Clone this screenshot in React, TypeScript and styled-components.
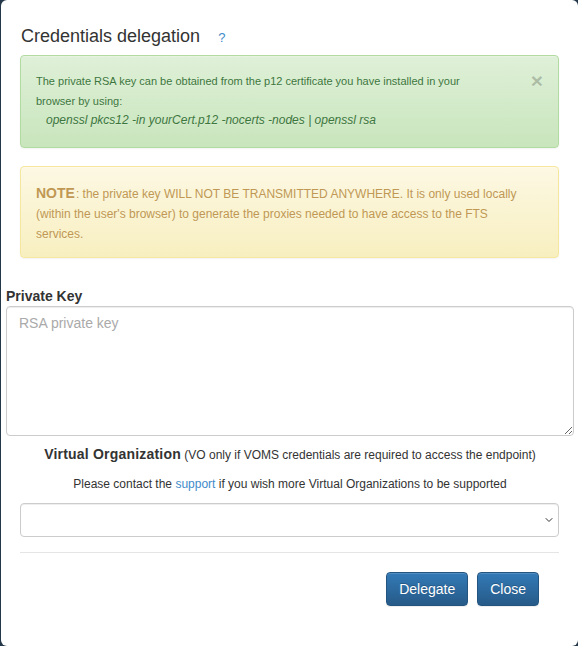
import React from 'react';
import styled, { createGlobalStyle } from 'styled-components';
import { ChevronDown } from 'lucide-react';

const GlobalStyle = createGlobalStyle`
  html, body {
    margin: 0;
    padding: 0;
    overflow: hidden;
    background: #24384a;
  }
  body {
    font-family: "Liberation Sans", Arial, sans-serif;
    color: #333;
  }
`;

const Modal = styled.div`
  box-sizing: border-box;
  margin-left: 1px;
  width: 577px;
  height: 646px;
  background: #fff;
  border-radius: 6px;
  padding: 0 4px 0 5px;
  display: flex;
  flex-direction: column;
`;

const Header = styled.div`
  display: flex;
  align-items: center;
  padding: 24px 15px 0 15px;
  height: 24px;
`;

const Title = styled.h4`
  margin: 0;
  font-size: 18px;
  font-weight: normal;
  line-height: 24px;
  color: #333;
`;

const Help = styled.a`
  margin-left: 18px;
  margin-top: 2px;
  font-size: 13px;
  color: #428bca;
  text-decoration: none;
`;

const Alert = styled.div<{ kind: 'success' | 'warning' }>`
  position: relative;
  margin: ${({ kind }) => (kind === 'success' ? '7px 15px 0 14px' : '18px 15px 0 14px')};
  padding: ${({ kind }) => (kind === 'success' ? '15px 35px 18px 15px' : '16px 35px 13px 15px')};
  border-radius: 4px;
  font-size: ${({ kind }) => (kind === 'success' ? '11px' : '12px')};
  line-height: 20px;
  text-shadow: 0 1px 0 rgba(255, 255, 255, 0.2);
  box-shadow: inset 0 1px 0 rgba(255, 255, 255, 0.25), 0 1px 2px rgba(0, 0, 0, 0.05);
  color: ${({ kind }) => (kind === 'success' ? '#3c763d' : '#c09853')};
  border: 1px solid ${({ kind }) => (kind === 'success' ? '#b2dba1' : '#f5e79e')};
  background: ${({ kind }) =>
    kind === 'success'
      ? 'linear-gradient(to bottom, #dff0d8 0, #c8e5bc 100%)'
      : 'linear-gradient(to bottom, #fcf8e3 0, #f8efc0 100%)'};
`;

const Command = styled.div`
  font-size: 12px;
  font-style: italic;
  line-height: 18px;
  padding-left: 10px;
`;

const CloseX = styled.button`
  position: absolute;
  top: 15px;
  right: 15px;
  border: 0;
  background: none;
  padding: 0;
  font-family: "Liberation Sans", Arial, sans-serif;
  font-size: 21px;
  font-weight: bold;
  line-height: 20px;
  color: #000;
  opacity: 0.2;
  text-shadow: 0 1px 0 #fff;
  cursor: pointer;
`;

const Note = styled.strong`
  font-size: 14px;
  margin-right: 1px;
`;

const FieldLabel = styled.label`
  display: block;
  margin-top: 28px;
  font-size: 14px;
  font-weight: bold;
  line-height: 20px;
  color: #333;
`;

const KeyArea = styled.textarea`
  box-sizing: border-box;
  display: block;
  width: 100%;
  height: 130px;
  margin: 0;
  padding: 6px 12px;
  border: 1px solid #ccc;
  border-radius: 4px;
  box-shadow: inset 0 1px 1px rgba(0, 0, 0, 0.075);
  font-family: "Liberation Sans", Arial, sans-serif;
  font-size: 14px;
  line-height: 20px;
  color: #555;
  &::placeholder {
    color: #aaa;
  }
`;

const CenterLine = styled.p<{ gap: number }>`
  margin: ${({ gap }) => gap}px 0 0;
  text-align: center;
  font-size: 12px;
  line-height: 20px;
  color: #333;
`;

const Strong = styled.strong`
  font-size: 14px;
  letter-spacing: 0.2px;
`;

const Link = styled.a`
  color: #428bca;
  text-decoration: none;
`;

const SelectWrap = styled.div`
  position: relative;
  margin: 9px 15px 0 14px;
`;

const VoSelect = styled.select`
  box-sizing: border-box;
  display: block;
  width: 100%;
  height: 34px;
  padding: 6px 12px;
  border: 1px solid #ccc;
  border-radius: 4px;
  background: #fff;
  appearance: none;
  box-shadow: inset 0 1px 1px rgba(0, 0, 0, 0.075);
  font-family: "Liberation Sans", Arial, sans-serif;
  font-size: 14px;
  color: #555;
`;

const Caret = styled(ChevronDown)`
  position: absolute;
  right: 4px;
  top: 11px;
  color: #333;
  pointer-events: none;
`;

const Rule = styled.hr`
  margin: 15px 15px 0 14px;
  border: 0;
  border-top: 1px solid #e5e5e5;
`;

const Footer = styled.div`
  display: flex;
  justify-content: flex-end;
  gap: 9px;
  padding: 19px 35px 0 0;
`;

const Button = styled.button`
  height: 34px;
  padding: 6px 12px;
  border: 1px solid #245580;
  border-radius: 4px;
  background: linear-gradient(to bottom, #337ab7 0, #265a88 100%);
  box-shadow: inset 0 1px 0 rgba(255, 255, 255, 0.15), 0 1px 1px rgba(0, 0, 0, 0.075);
  text-shadow: 0 -1px 0 rgba(0, 0, 0, 0.2);
  font-family: "Liberation Sans", Arial, sans-serif;
  font-size: 14px;
  line-height: 20px;
  color: #fff;
  cursor: pointer;
`;

export default function App() {
  return (
    <>
      <GlobalStyle />
      <Modal>
        <Header>
          <Title>Credentials delegation</Title>
          <Help href="#">?</Help>
        </Header>

        <Alert kind="success">
          The private RSA key can be obtained from the p12 certificate you have installed in your
          <br />
          browser by using:
          <Command>openssl pkcs12 -in yourCert.p12 -nocerts -nodes | openssl rsa</Command>
          <CloseX type="button">×</CloseX>
        </Alert>

        <Alert kind="warning">
          <Note>NOTE</Note>: the private key WILL NOT BE TRANSMITTED ANYWHERE. It is only used locally
          (within the user's browser) to generate the proxies needed to have access to the FTS
          services.
        </Alert>

        <FieldLabel htmlFor="pkey">Private Key</FieldLabel>
        <KeyArea id="pkey" placeholder="RSA private key" />

        <CenterLine gap={8}>
          <Strong>Virtual Organization</Strong> (VO only if VOMS credentials are required to access
          the endpoint)
        </CenterLine>
        <CenterLine gap={9}>
          Please contact the <Link href="#">support</Link> if you wish more Virtual Organizations to
          be supported
        </CenterLine>

        <SelectWrap>
          <VoSelect defaultValue="">
            <option value=""></option>
          </VoSelect>
          <Caret size={12} strokeWidth={2} />
        </SelectWrap>

        <Rule />

        <Footer>
          <Button type="button">Delegate</Button>
          <Button type="button">Close</Button>
        </Footer>
      </Modal>
    </>
  );
}
